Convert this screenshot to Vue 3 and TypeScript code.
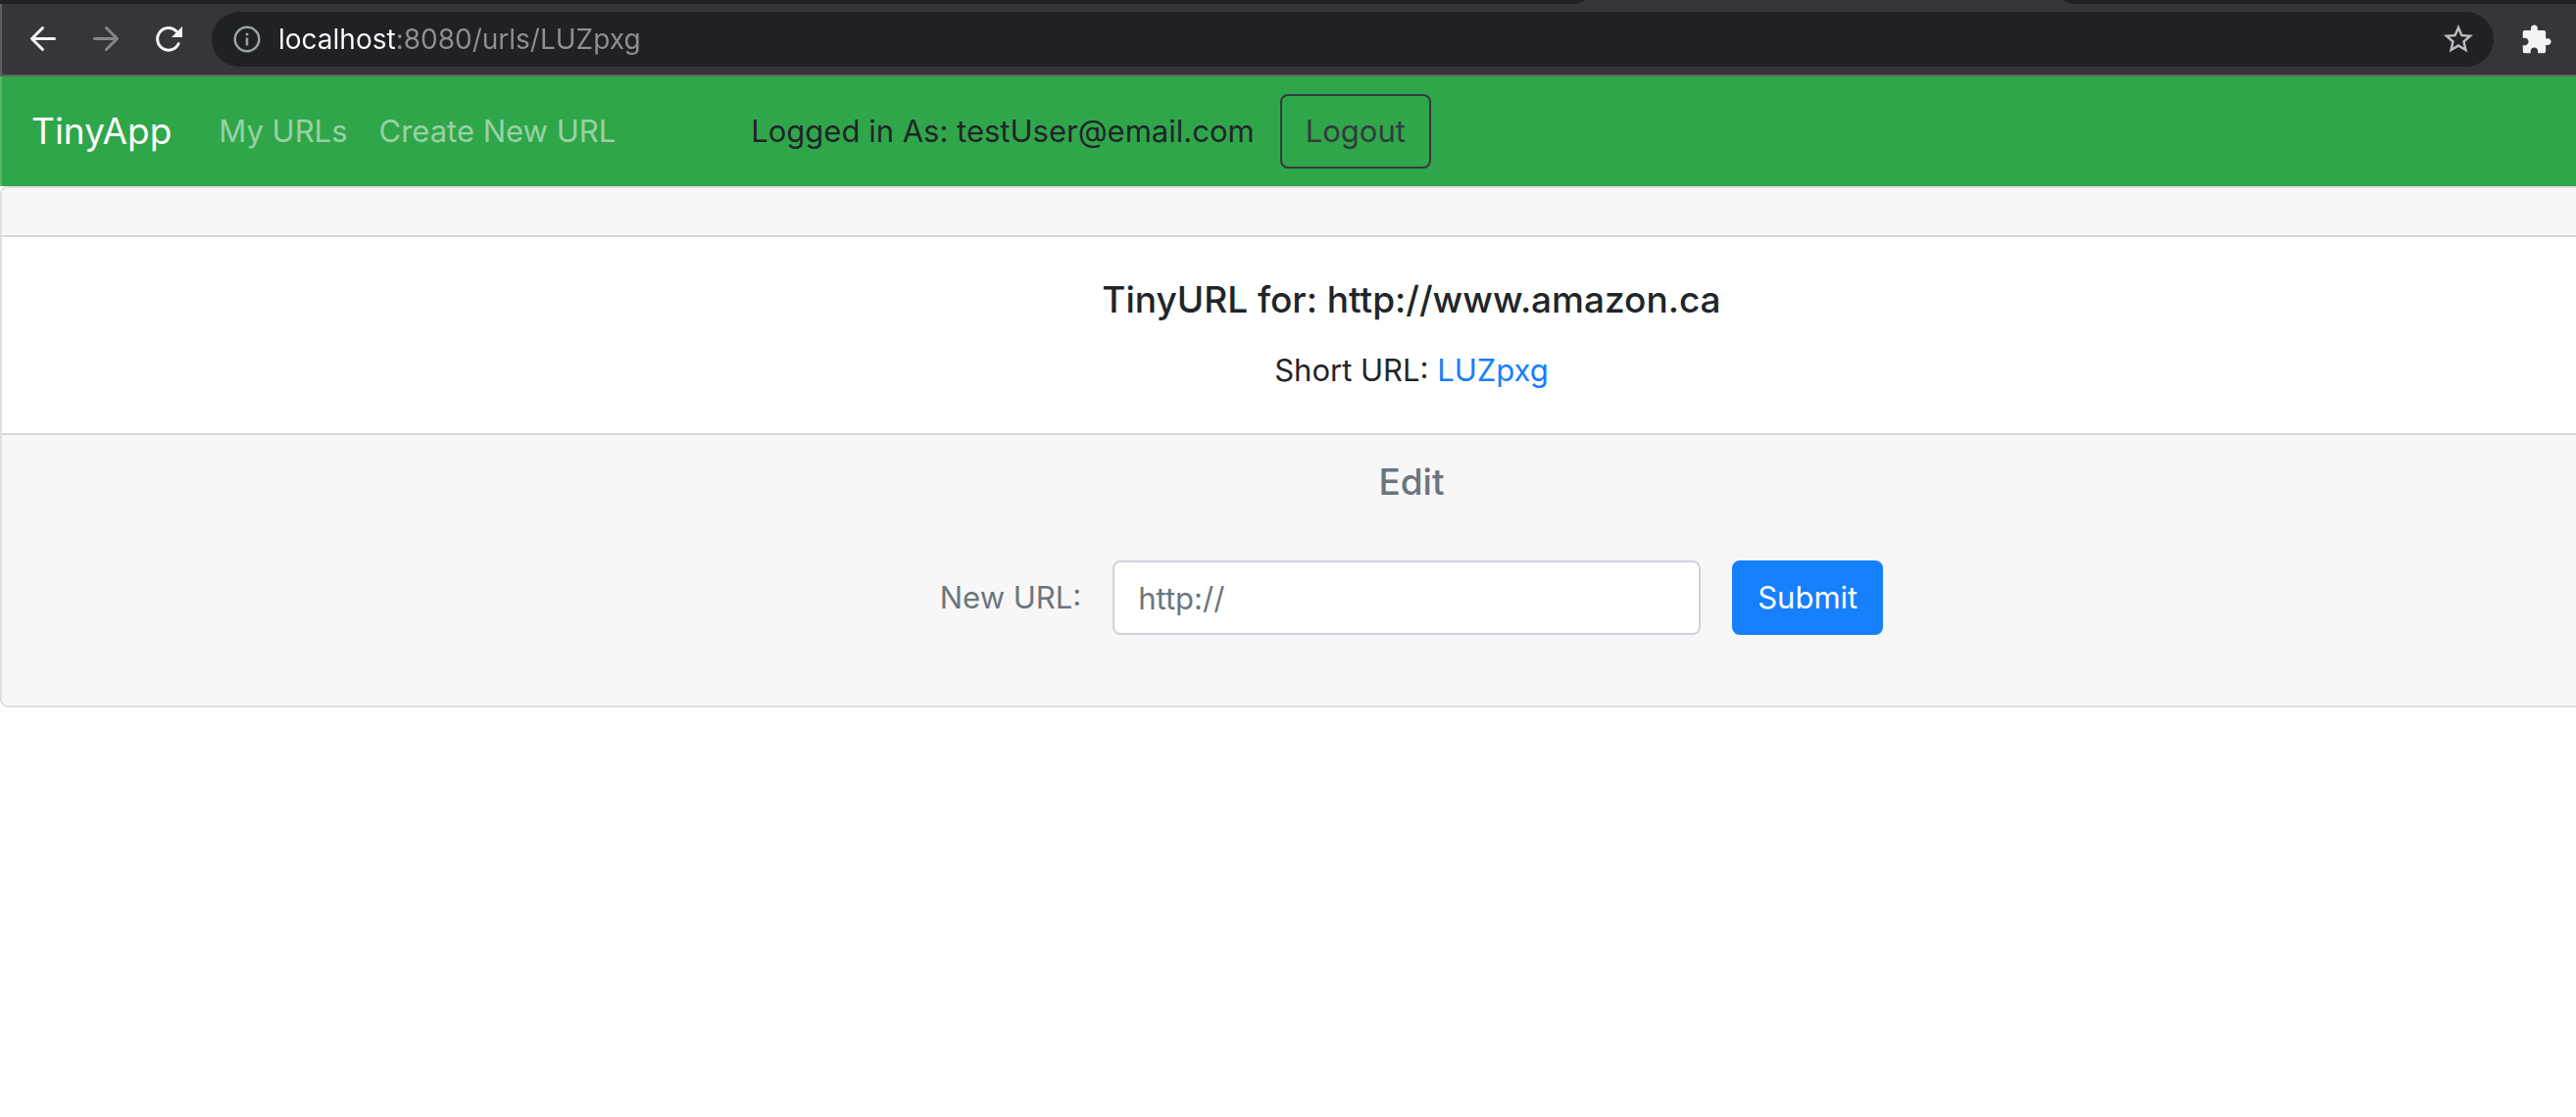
<script setup lang="ts">
import { ref } from 'vue'

interface NavLink {
  label: string
  href: string
}

const links: NavLink[] = [
  { label: 'My URLs', href: '/urls' },
  { label: 'Create New URL', href: '/urls/new' },
]

const email = 'testUser@email.com'
const shortUrl = 'LUZpxg'
const longUrl = 'http://www.amazon.ca'
const address = ref(`localhost:8080/urls/${shortUrl}`)
const newUrl = ref('')
</script>

<template>
  <div class="window">
    <div class="tabs">
      <div class="tabs-left"></div>
      <div class="tab-active"></div>
      <div class="tabs-right"></div>
    </div>

    <div class="toolbar">
      <div class="controls">
        <button type="button" class="icon-button" aria-label="Back">
          <svg viewBox="0 0 32 32" width="32" height="32" fill="none" stroke="#f1f3f4" stroke-width="3" stroke-linecap="round" stroke-linejoin="round">
            <path d="M27.5 15.5H5M15.500 4.500L4.500 15.500L15.500 26.500" />
          </svg>
        </button>
        <button type="button" class="icon-button" aria-label="Forward">
          <svg viewBox="0 0 32 32" width="32" height="32" fill="none" stroke="#868688" stroke-width="3" stroke-linecap="round" stroke-linejoin="round">
            <path d="M4.500 15.500H27M16.500 4.500L27.500 15.500L16.500 26.500" />
          </svg>
        </button>
        <button type="button" class="icon-button" aria-label="Reload">
          <svg viewBox="0 0 32 32" width="32" height="32">
            <path d="M26.200 20.500A11.300 11.300 0 1 1 24 8" fill="none" stroke="#f1f3f4" stroke-width="3" stroke-linecap="round" />
            <path d="M30 3V14H19Z" fill="#f1f3f4" />
          </svg>
        </button>
      </div>

      <div class="omnibox">
        <svg viewBox="0 0 32 32" width="32" height="32">
          <circle cx="16" cy="16" r="12.300" fill="none" stroke="#9aa0a6" stroke-width="2.500" />
          <path d="M14.700 14.500H17.300V22.500H14.700ZM14.700 9.700H17.300V12.300H14.700Z" fill="#9aa0a6" />
        </svg>
        <input v-model="address" class="address" type="text" aria-label="Address" spellcheck="false" />
        <button type="button" class="icon-button" aria-label="Bookmark this tab">
          <svg viewBox="0 0 24 24" width="36" height="36" fill="#bdbdbd">
            <path d="M22 9.240l-7.190-.62L12 2 9.190 8.630 2 9.240l5.460 4.730L5.820 21 12 17.270 18.180 21l-1.630-7.030L22 9.240zM12 15.400l-3.760 2.270 1-4.280-3.320-2.880 4.380-.38L12 6.100l1.710 4.040 4.380.38-3.320 2.880 1 4.280L12 15.400z" />
          </svg>
        </button>
      </div>

      <button type="button" class="icon-button" aria-label="Extensions">
        <svg viewBox="0 0 24 24" width="33" height="33" fill="#f1f3f4">
          <path d="M20.500 11H19V6.500c0-.8-.7-1.500-1.500-1.500H13V3.500C13 2.120 11.880 1 10.500 1S8 2.120 8 3.500V5H3.500C2.700 5 2 5.700 2 6.500v4.300h1.500c1.490 0 2.700 1.210 2.700 2.700s-1.210 2.700-2.700 2.700H2v4.300c0 .8.700 1.500 1.500 1.500h4.300v-1.500c0-1.490 1.210-2.700 2.700-2.700s2.700 1.210 2.700 2.700V22h4.300c.8 0 1.500-.7 1.500-1.500V16h1.500c1.380 0 2.500-1.120 2.500-2.500S21.880 11 20.500 11z" />
        </svg>
      </button>
    </div>

    <nav class="navbar">
      <a class="brand" href="/">TinyApp</a>
      <div class="links">
        <a v-for="link in links" :key="link.href" :href="link.href">{{ link.label }}</a>
      </div>
      <form class="session" @submit.prevent>
        <span>Logged in As: {{ email }}</span>
        <button type="submit" class="button outline">Logout</button>
      </form>
    </nav>

    <main class="card">
      <div class="card-header"></div>
      <div class="card-body">
        <h1 class="title">TinyURL for: {{ longUrl }}</h1>
        <p class="short">Short URL: <a :href="`/u/${shortUrl}`">{{ shortUrl }}</a></p>
      </div>
      <div class="card-footer">
        <h2 class="title">Edit</h2>
        <form class="edit" @submit.prevent>
          <label for="new-url">New URL:</label>
          <input id="new-url" v-model="newUrl" type="text" placeholder="http://" />
          <button type="submit" class="button primary">Submit</button>
        </form>
      </div>
    </main>
  </div>
</template>

<style>
body {
  margin: 0;
  background: #fff;
}
</style>

<style scoped>
.window {
  overflow: hidden;
  color: #212529;
  font: 400 31px/48px Inter, "Liberation Sans", sans-serif;
}

.window * {
  box-sizing: border-box;
}

button,
input {
  font: inherit;
}

a {
  text-decoration: none;
}

svg {
  display: block;
}

.tabs {
  display: flex;
  height: 4px;
  background: #35363a;
}

.tabs-left,
.tabs-right {
  background: #202124;
}

.tabs-left {
  flex: 1;
  border-bottom-right-radius: 12px 4px;
}

.tab-active {
  width: 490px;
}

.tabs-right {
  width: 522px;
  border-bottom-left-radius: 12px 4px;
}

.toolbar {
  display: flex;
  align-items: center;
  height: 74px;
  padding: 0 24px 0 26px;
  border-left: 2px solid rgba(255, 255, 255, 0.2);
  border-bottom: 2px solid #605f63;
  background: #35363a;
}

.controls {
  display: flex;
  gap: 32px;
}

.icon-button {
  flex: none;
  padding: 0;
  border: 0;
  background: none;
}

.omnibox {
  display: flex;
  flex: 1;
  align-items: center;
  gap: 16px;
  height: 56px;
  margin: 0 27px 0 28px;
  padding: 0 18px 0 20px;
  border-radius: 28px;
  background: #202124;
}

/* The host is drawn bright, the port and path dimmed. */
.address {
  flex: 1;
  min-width: 0;
  height: 48px;
  padding: 0;
  border: 0;
  outline: 0;
  background: linear-gradient(90deg, #fff 122px, #8f8f91 122px);
  background-clip: text;
  color: #fff;
  -webkit-text-fill-color: transparent;
  font-size: 28px;
}

.navbar {
  display: flex;
  align-items: center;
  height: 112px;
  padding: 0 30px;
  border-left: 2px solid rgba(255, 255, 255, 0.2);
  background: #30a64a;
}

.brand {
  margin-right: 48px;
  color: #fff;
  font-size: 37px;
}

.links {
  display: flex;
  gap: 32px;
  margin-right: 138px;
}

.links a {
  color: rgba(255, 255, 255, 0.5);
}

.session {
  display: flex;
  align-items: center;
  gap: 26px;
}

.button {
  height: 76px;
  padding: 0 24px;
  border: 2px solid;
  border-radius: 8px;
}

.outline {
  border-color: #343a40;
  background: none;
  color: #343a40;
}

.primary {
  border-color: #167ffc;
  background: #167ffc;
  color: #fff;
}

/* The card runs on past the right edge of the window. */
.card {
  margin-right: -252px;
  border: 2px solid #dfdfdf;
  border-radius: 8px;
  text-align: center;
}

.card-header {
  height: 50px;
  border-bottom: 2px solid #d8d8d8;
  border-radius: 6px 6px 0 0;
  background: #f7f7f7;
}

.card-body {
  padding: 40px;
}

.title {
  margin: 0;
  font-size: 37px;
  font-weight: 500;
  line-height: 48px;
}

.short {
  margin: 24px 0 0;
}

.short a {
  color: #167ffc;
}

.card-footer {
  padding: 24px 40px 72px;
  border-top: 2px solid #d8d8d8;
  border-radius: 0 0 6px 6px;
  background: #f7f7f7;
  color: #6c757d;
}

.edit {
  display: flex;
  align-items: center;
  justify-content: center;
  gap: 32px;
  margin-top: 56px;
}

.edit input {
  width: 600px;
  height: 76px;
  padding: 0 24px;
  border: 2px solid #ced4da;
  border-radius: 8px;
  background: #fff;
  color: #495057;
}

.edit input::placeholder {
  color: #6c757d;
  opacity: 1;
}
</style>
